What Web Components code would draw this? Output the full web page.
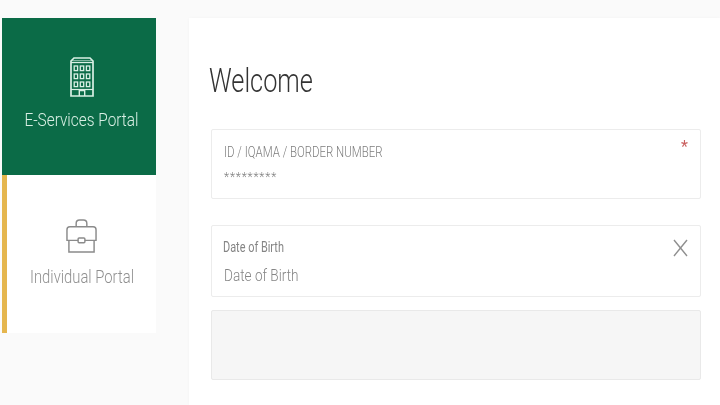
<!DOCTYPE html>
<html>
<head>
<meta charset="utf-8">
<title>Portal</title>
<style>
  html, body { margin: 0; height: 100%; overflow: hidden; }
  body { background: #fafafa; font-family: "Roboto", "Liberation Sans", sans-serif; }
</style>
</head>
<body>
<login-page>
  <portal-tab slot="tabs" label="E-Services Portal" icon="building" active></portal-tab>
  <portal-tab slot="tabs" label="Individual Portal" icon="briefcase"></portal-tab>
  <text-field slot="fields" label="ID / IQAMA / BORDER NUMBER" value="*********" required></text-field>
  <text-field slot="fields" label="Date of Birth" value="Date of Birth" clearable small-label></text-field>
  <captcha-box slot="fields"></captcha-box>
</login-page>

<script>
const ICONS = {
  building: `<svg width="24" height="40" viewBox="0 0 24 40" fill="none" stroke="#d9efe4" stroke-width="1.7">
      <path d="M1 39V4l3-3h16l3 3v35z" fill="#0b6b47"/>
      <path d="M1 5.500h22" stroke-width="1.300"/>
      <path d="M1 3.500h22" stroke-width=".8" opacity=".7"/>
      <g stroke-width="1.300">
        <rect x="4.200" y="9" width="3.400" height="4.600"/><rect x="10.300" y="9" width="3.400" height="4.600"/><rect x="16.400" y="9" width="3.400" height="4.600"/>
        <rect x="4.200" y="17" width="3.400" height="4.600"/><rect x="10.300" y="17" width="3.400" height="4.600"/><rect x="16.400" y="17" width="3.400" height="4.600"/>
        <rect x="4.200" y="25" width="3.400" height="4.600"/><rect x="10.300" y="25" width="3.400" height="4.600"/><rect x="16.400" y="25" width="3.400" height="4.600"/>
      </g>
      <path d="M1 32.500h22" stroke-width="1.200"/>
      <path d="M9.300 39v-5.500h5.400V39" stroke-width="1.400"/>
    </svg>`,
  briefcase: `<svg width="31" height="34" viewBox="0 0 32 35" fill="none" stroke="#8b8b8b" stroke-width="1.500">
      <path d="M10.500 8V4.500Q10.500 1 14 1h4q3.500 0 3.500 3.500V8"/>
      <path d="M1 11q0-3 3-3h24q3 0 3 3v11H1z"/>
      <path d="M3 22v12h26V22"/>
      <rect x="12.500" y="19.500" width="7" height="5" rx="1" fill="#fff"/>
    </svg>`
};

class LoginPage extends HTMLElement {
  constructor() {
    super();
    this.attachShadow({ mode: 'open' }).innerHTML = `
      <style>
        :host {
          display: flex;
          align-items: flex-start;
          gap: 33px;
          height: 405px;
          box-sizing: border-box;
          padding: 18px 0 0 2px;
        }
        .tabs { display: flex; flex-direction: column; width: 154px; flex: none; }
        main {
          flex: 1;
          align-self: stretch;
          background: #fff;
          padding: 41px 19px 0 22px;
          box-shadow: 0 0 3px rgba(0,0,0,.03);
        }
        h1 {
          margin: 0 0 27px -2px;
          font: 300 34px/43px "Roboto", sans-serif;
          color: #333;
          transform: scaleX(.745);
          transform-origin: left center;
          white-space: nowrap;
          filter: blur(.3px);
        }
        .fields { display: flex; flex-direction: column; }
      </style>
      <div class="tabs"><slot name="tabs"></slot></div>
      <main>
        <h1>Welcome</h1>
        <div class="fields"><slot name="fields"></slot></div>
      </main>`;
  }
}

class PortalTab extends HTMLElement {
  constructor() {
    super();
    const icon = ICONS[this.getAttribute('icon')] || '';
    this.attachShadow({ mode: 'open' }).innerHTML = `
      <style>
        :host {
          display: flex;
          flex-direction: column;
          align-items: center;
          box-sizing: border-box;
          height: 158px;
          padding-top: 43px;
          background: #fff;
          color: #8f8f8f;
          border-left: 5px solid #e5b64e;
        }
        :host([active]) {
          height: 157px;
          padding-top: 39px;
          background: #0b6b47;
          color: #d9efe4;
          border-left-color: #0b6b47;
        }
        .ico { height: 35px; display: flex; align-items: flex-end; }
        :host([active]) .ico { height: 40px; }
        .txt {
          margin-top: 12px;
          font: 300 18.500px/24px "Roboto", sans-serif;
          white-space: nowrap;
          transform: scaleX(.8);
          filter: blur(.25px);
        }
        :host([active]) .txt { transform: scaleX(.81); font-size: 19px; margin-top: 11px; }
      </style>
      <div class="ico">${icon}</div>
      <div class="txt">${this.getAttribute('label')}</div>`;
  }
}

class TextField extends HTMLElement {
  constructor() {
    super();
    const label = this.getAttribute('label');
    const value = this.getAttribute('value');
    const clear = this.hasAttribute('clearable')
      ? `<svg class="x" width="15" height="18" viewBox="0 0 15 18" fill="none" stroke="#8f8f8f" stroke-width="1.400"><path d="M1 1l13 16M14 1L1 17"/></svg>` : '';
    const req = this.hasAttribute('required') ? `<span class="req">*</span>` : '';
    this.attachShadow({ mode: 'open' }).innerHTML = `
      <style>
        :host {
          display: block;
          position: relative;
          box-sizing: border-box;
          height: 70px;
          margin-bottom: 26px;
          background: #fff;
          border: 1px solid #ececec;
          border-radius: 2px;
          padding: 13px 12px 0 12px;
          color: #7d7d7d;
        }
        :host([small-label]) { height: 72px; margin-bottom: 13px; padding: 11px 12px 0 11px; }
        .lbl, .val { white-space: nowrap; transform-origin: left center; filter: blur(.25px); }
        .lbl { font: 300 14.500px/20px "Roboto", sans-serif; transform: scaleX(.79); }
        :host([small-label]) .lbl { font-weight: 400; font-size: 14px; transform: scaleX(.78); color: #858585; }
        .val { font: 300 12px/20px "Roboto", sans-serif; letter-spacing: .8px; margin-top: 4px; }
        :host([small-label]) .val { font-size: 17px; letter-spacing: 0; margin: 8px 0 0 1px; color: #858585; font-weight: 300; transform: scaleX(.8); }
        .req { position: absolute; top: 7px; right: 12px; color: #c9605f; font: 400 16px/20px "Roboto", sans-serif; filter: blur(.3px); }
        .x { position: absolute; top: 13px; right: 12px; }
      </style>
      <div class="lbl">${label}</div>
      <div class="val">${value}</div>
      ${req}${clear}`;
  }
}

class CaptchaBox extends HTMLElement {
  constructor() {
    super();
    this.attachShadow({ mode: 'open' }).innerHTML = `
      <style>
        :host {
          display: block;
          box-sizing: border-box;
          height: 70px;
          background: #f6f6f6;
          border: 1px solid #e9e9e9;
          border-radius: 2px;
        }
      </style>`;
  }
}

customElements.define('login-page', LoginPage);
customElements.define('portal-tab', PortalTab);
customElements.define('text-field', TextField);
customElements.define('captcha-box', CaptchaBox);
</script>
</body>
</html>
